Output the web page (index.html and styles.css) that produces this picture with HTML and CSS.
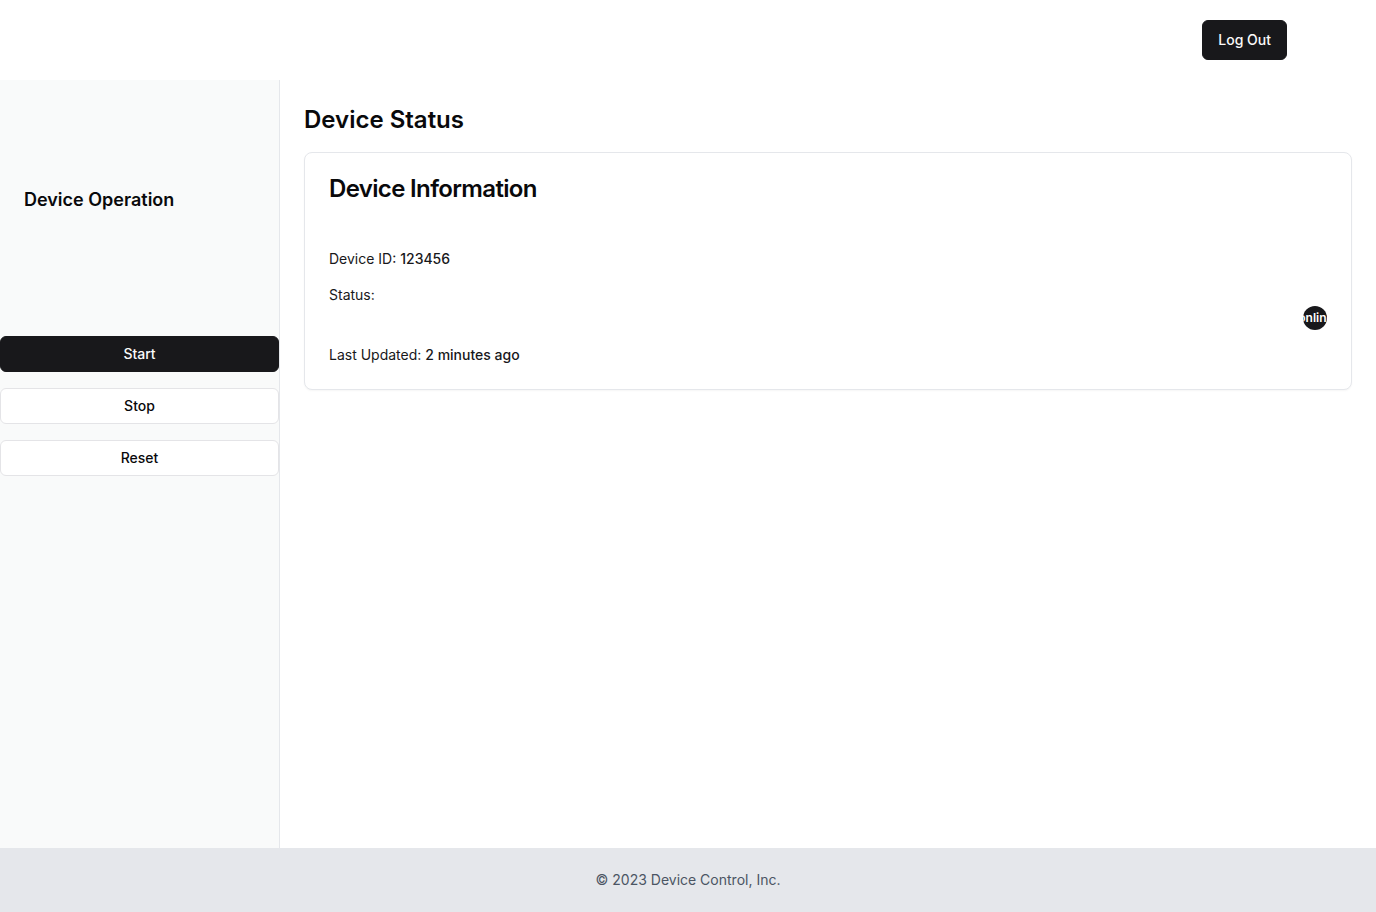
FILE: index.html
```html
<!DOCTYPE html>
<html lang="en">
<head>
<meta charset="utf-8">
<title>Device Control</title>
<link rel="stylesheet" href="styles.css">
</head>
<body>
<div class="page">
  <header class="topbar">
    <button class="btn btn-dark logout">Log Out</button>
  </header>
  <div class="middle">
    <aside class="sidebar">
      <h2 class="side-title">Device Operation</h2>
      <div class="side-actions">
        <button class="btn btn-dark side-btn">Start</button>
        <button class="btn btn-outline side-btn">Stop</button>
        <button class="btn btn-outline side-btn">Reset</button>
      </div>
    </aside>
    <main class="main">
      <h1 class="page-title">Device Status</h1>
      <section class="card">
        <div class="card-header">
          <h3 class="card-title">Device Information</h3>
        </div>
        <div class="card-content">
          <div class="row"><span class="label">Device ID:</span> <span class="value">123456</span></div>
          <div class="row status-row">
            <span class="label">Status:</span>
            <span class="badge"><span class="badge-text">online</span></span>
          </div>
          <div class="row row-last"><span class="label">Last Updated:</span> <span class="value">2 minutes ago</span></div>
        </div>
      </section>
    </main>
  </div>
  <footer class="footer">© 2023 Device Control, Inc.</footer>
</div>
</body>
</html>
```
FILE: styles.css
```css
* { box-sizing: border-box; }
html, body { margin: 0; padding: 0; }
body {
  font-family: Inter, "Noto Sans", sans-serif;
  color: #09090b;
  background: #ffffff;
}
.page {
  display: flex;
  flex-direction: column;
  min-height: 100vh;
  height: 912px;
}
.topbar {
  height: 80px;
  flex: none;
  display: flex;
  align-items: center;
  justify-content: flex-end;
  padding-right: 89px;
}
.btn {
  font-family: inherit;
  font-size: 14px;
  font-weight: 500;
  line-height: 20px;
  border-radius: 6px;
  cursor: pointer;
  display: inline-flex;
  align-items: center;
  justify-content: center;
}
.btn-dark {
  background: #18181b;
  color: #fafafa;
  border: 1px solid #18181b;
}
.btn-outline {
  background: #ffffff;
  color: #09090b;
  border: 1px solid #e4e4e7;
}
.logout {
  height: 40px;
  padding: 0 15px;
}
.middle {
  flex: 1;
  display: flex;
  min-height: 0;
}
.sidebar {
  width: 280px;
  flex: none;
  background: #f9fafa;
  border-right: 1px solid #e5e7eb;
  display: flex;
  flex-direction: column;
}
.side-title {
  margin: 0;
  padding: 106px 24px 0;
  font-size: 18px;
  font-weight: 600;
  line-height: 28px;
}
.side-actions {
  margin-top: 122px;
  display: flex;
  flex-direction: column;
  gap: 16px;
}
.side-btn {
  width: 100%;
  height: 36px;
  padding: 0 16px;
}
.main {
  flex: 1;
  padding: 24px 24px 24px;
}
.page-title {
  margin: 0 0 16px;
  font-size: 24px;
  font-weight: 600;
  line-height: 32px;
}
.card {
  border: 1px solid #e5e7eb;
  border-radius: 8px;
  background: #ffffff;
  box-shadow: 0 1px 2px rgba(0,0,0,0.04);
}
.card-header {
  padding: 24px 24px 46px;
}
.card-title {
  margin: 0;
  font-size: 24px;
  font-weight: 600;
  line-height: 24px;
  letter-spacing: -0.65px;
}
.card-content {
  padding: 0 24px 22px;
  display: flex;
  flex-direction: column;
  gap: 12px;
}
.row {
  font-size: 14px;
  line-height: 24px;
  color: #18181b;
}
.row-last { margin-top: 1px; }
.label { font-weight: 400; }
.value { font-weight: 500; }
.status-row {
  display: flex;
  flex-direction: column;
}
.badge {
  align-self: flex-end;
  width: 24px;
  height: 24px;
  margin-top: -1px;
  border-radius: 50%;
  background: #18181b;
  color: #ffffff;
  display: flex;
  align-items: center;
  justify-content: center;
  overflow: hidden;
}
.badge-text {
  flex: none;
  white-space: nowrap;
  font-size: 12px;
  font-weight: 600;
  line-height: 16px;
  padding-left: 2px;
}
.footer {
  height: 64px;
  flex: none;
  background: #e5e7eb;
  color: #4b5563;
  font-size: 14px;
  display: flex;
  align-items: center;
  justify-content: center;
  padding-bottom: 1px;
}
```
